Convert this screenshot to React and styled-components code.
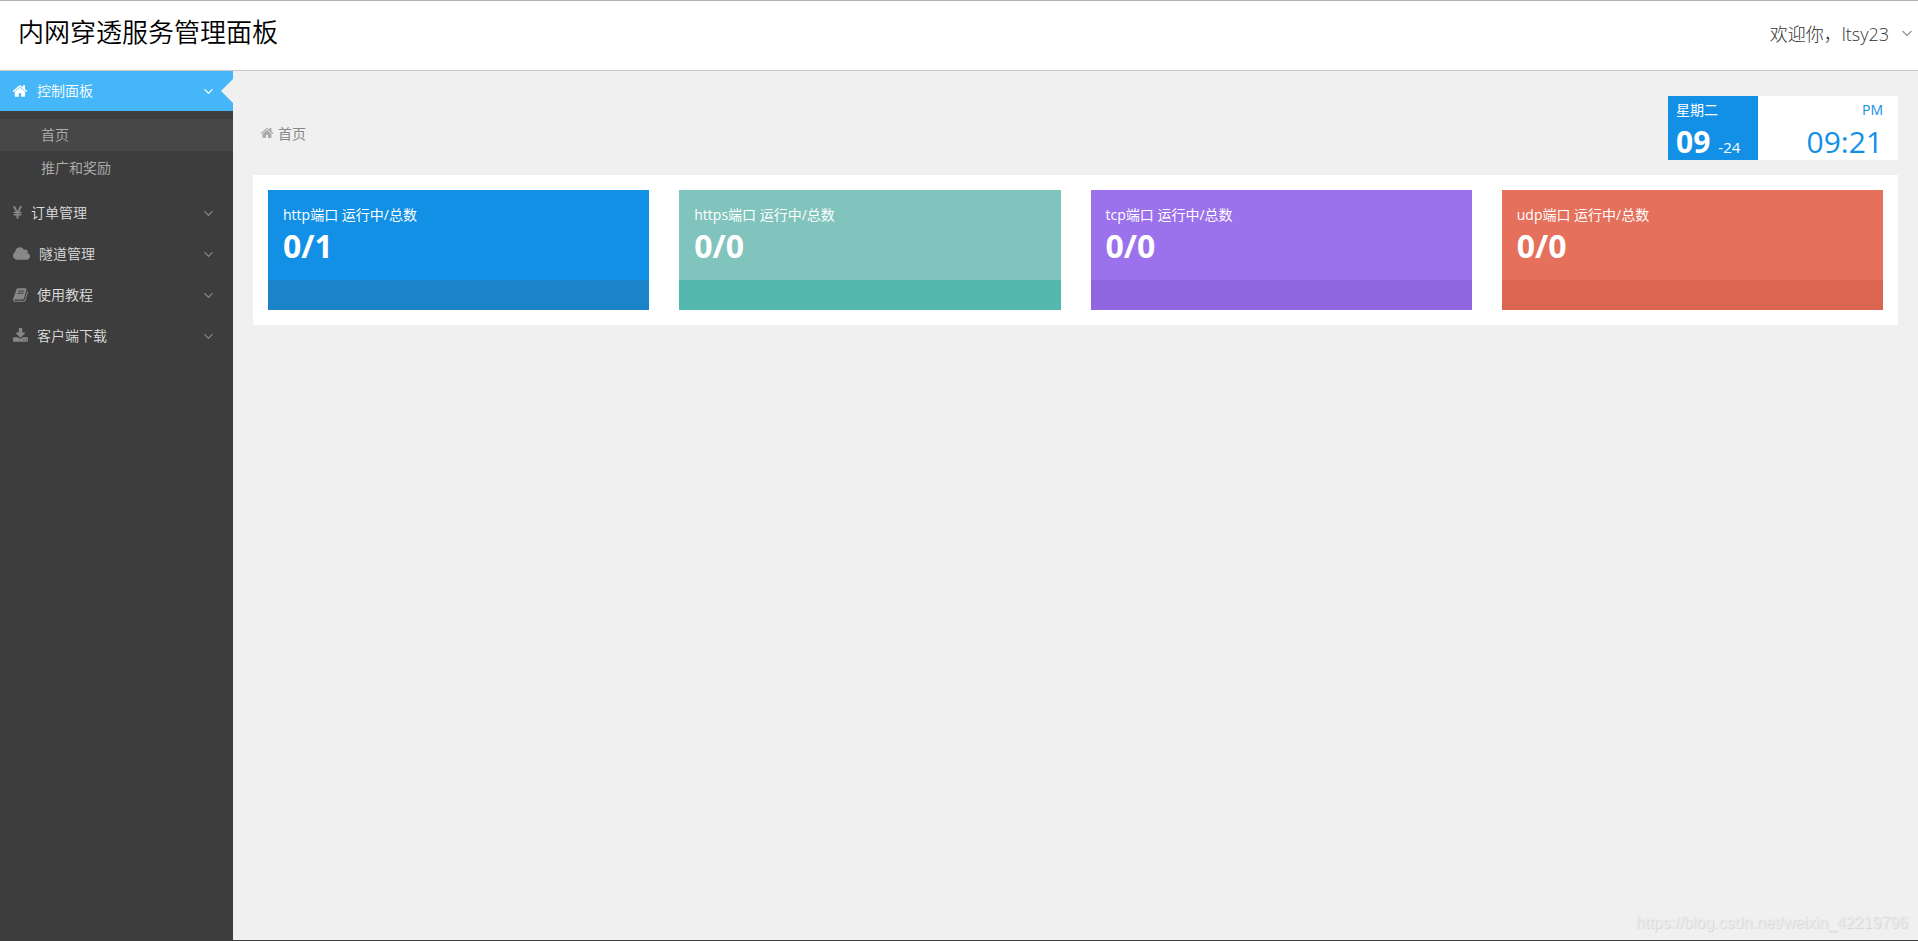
import { useState } from "react"
import styled, { createGlobalStyle } from "styled-components"

const GlobalStyle = createGlobalStyle`
* {
box-sizing:border-box;
}
body {
margin:0;
background:#f0f0f0;
font-family:"Open Sans", "Noto Sans CJK SC", sans-serif;
font-size:14px;
}
a {
color:inherit;
text-decoration:none;
}
h1, p, ul {
margin:0;
padding:0;
}
ul {
list-style:none;
}
`

const Page = styled.div`
display:flex;
flex-direction:column;
min-height:100vh;
border-top:1px solid #b0b0b0;
border-bottom:1px solid #3d3d3d;
`
const Header = styled.header`
display:flex;
justify-content:space-between;
height:70px;
padding:0 6px 0 18px;
background:#fff;
border-bottom:1px solid #c8c8c8;
`
const Title = styled.h1`
font-size:26px;
font-weight:350;
line-height:62px;
color:#000;
`
const UserButton = styled.button`
display:flex;
align-items:center;
gap:13px;
height:64px;
padding:0;
border:0;
background:none;
font-family:inherit;
font-size:18px;
font-weight:300;
color:#333;
cursor:pointer;
svg {
fill:#999;
}
`
const Body = styled.div`
display:flex;
flex:1;
`
const Sidebar = styled.nav`
flex:0 0 233px;
background:#3d3d3d;
`
const Menu = styled.ul`
display:flex;
flex-direction:column;
gap:1px;
`
const MenuLink = styled.a`
position:relative;
display:flex;
align-items:center;
gap:9px;
height:40px;
padding:0 20px 0 13px;
font-weight:350;
color:${(props) => (props.$active ? "#fff" : "#ddd")};
background:${(props) => (props.$active ? "#45b6f7" : "transparent")};
svg {
fill:${(props) => (props.$active ? "#fff" : "#888")};
}
&::after {
content:"";
display:${(props) => (props.$active ? "block" : "none")};
position:absolute;
top:8px;
right:0;
border:12px solid transparent;
border-left-width:0;
border-right-color:#f0f0f0;
}
`
const MenuText = styled.span`
flex:1;
padding-bottom:2px;
`
const SubMenu = styled.ul`
display:flex;
flex-direction:column;
gap:1px;
padding:8px 0;
`
const SubLink = styled.a`
display:block;
padding-left:41px;
line-height:32px;
font-weight:350;
color:#b0b0b0;
background:${(props) => (props.$active ? "#474747" : "transparent")};
`
const Main = styled.main`
display:flex;
flex-direction:column;
flex:1;
min-width:0;
padding:25px 20px 0;
`
const TopRow = styled.div`
display:flex;
justify-content:space-between;
align-items:center;
margin-bottom:15px;
`
const Breadcrumb = styled.a`
display:flex;
align-items:center;
gap:4px;
padding:10px 0 0 8px;
color:#888;
svg {
fill:#aaa;
}
`
const Clock = styled.div`
display:flex;
height:64px;
`
const DateBox = styled.div`
width:90px;
padding:4px 8px 0;
color:#fff;
background:#1190e6;
`
const TimeBox = styled.div`
width:140px;
padding:4px 15px 0;
text-align:right;
color:#1190e6;
background:#fff;
`
const SmallLine = styled.p`
line-height:20px;
`
const BigLine = styled.p`
display:flex;
align-items:baseline;
justify-content:${(props) => (props.$end ? "flex-end" : "flex-start")};
gap:8px;
line-height:44px;
font-size:15px;
`
const BigText = styled.span`
font-size:30px;
font-weight:${(props) => (props.$bold ? 700 : 400)};
`
const Panel = styled.section`
display:grid;
grid-template-columns:repeat(4, 1fr);
gap:30px;
padding:15px;
background:#fff;
`
const Tile = styled.article`
color:#fff;
background:${(props) => props.$color};
border-bottom:30px solid ${(props) => props.$dark};
`
const TileBody = styled.div`
height:90px;
padding:15px 15px 0;
`
const TileCount = styled.p`
font-size:32px;
font-weight:700;
line-height:42px;
`
const Watermark = styled.footer`
margin-top:auto;
padding:0 0 7px;
margin-right:-10px;
text-align:right;
font-family:"Liberation Sans", sans-serif;
font-size:16px;
line-height:20px;
color:#ebebeb;
text-shadow:1px 1px 1px #d4d4d4;
`

const icons = {
    home: {
        x: 64,
        width: 1664,
        d: "M1408 992v480q0 26-19 45t-45 19h-384v-384h-256v384h-384q-26 0-45-19t-19-45v-480q0-1 .5-3t.5-3l575-474 575 474q1 2 1 6zm223-69l-62 74q-8 9-21 11h-3q-13 0-21-7l-692-577-692 577q-12 8-24 7-13-2-21-11l-62-74q-8-10-7-23.5t11-21.5l719-599q32-26 76-26t76 26l244 204v-195q0-14 9-23t23-9h192q14 0 23 9t9 23v408l219 182q10 8 11 21.5t-7 23.5z",
    },
    yen: {
        x: 385,
        width: 1027,
        d: "M985.5 1536h-172q-13 0-22.5-9t-9.5-23v-330h-288q-13 0-22.5-9t-9.5-23v-103q0-13 9.5-22.5t22.5-9.5h288v-85h-288q-13 0-22.5-9t-9.5-23v-104q0-13 9.5-22.5t22.5-9.5h214l-321-578q-8-16 0-32 10-16 28-16h194q19 0 29 18l215 425q19 38 56 125 10-24 30.5-68t27.5-61l191-420q8-19 29-19h191q17 0 27 16 9 14 1 31l-313 579h215q13 0 22.5 9.5t9.5 22.5v104q0 14-9.5 23t-22.5 9h-290v85h290q13 0 22.5 9.5t9.5 22.5v103q0 14-9.5 23t-22.5 9h-290v330q0 13-9.5 22.5t-22.5 9.5z",
    },
    cloud: {
        x: 64,
        width: 1920,
        d: "M1984 1152q0 159-112.5 271.5t-271.5 112.5h-1088q-185 0-316.5-131.5t-131.5-316.5q0-132 71-241.5t187-163.5q-2-28-2-43 0-212 150-362t362-150q158 0 286.5 88t187.5 230q70-62 166-62 106 0 181 75t75 181q0 75-41 138 129 30 213 134.5t84 239.5z",
    },
    book: {
        x: 64,
        width: 1664,
        d: "M1703 478q40 57 18 129l-275 906q-19 64-76.5 107.5t-122.5 43.5h-923q-77 0-148.5-53.5t-99.5-131.5q-24-67-2-127 0-4 3-27t4-37q1-8-3-21.5t-3-19.5q2-11 8-21t16.5-23.5 16.5-23.5q23-38 45-91.5t30-91.5q3-10 .5-30t-.5-28q3-11 17-28t17-23q21-36 42-92t25-90q1-9-2.5-32t.5-28q4-13 22-30.5t22-22.5q19-26 42.5-84.5t27.5-96.5q1-8-3-25.5t-2-26.5q2-8 9-18t18-23 17-21q8-12 16.5-30.5t15-35 16-36 19.5-32 26.5-23.5 36-11.5 47.5 5.5l-1 3q38-9 51-9h761q74 0 114 56t18 130l-274 906q-36 119-71.5 153.5t-128.5 34.5h-869q-27 0-38 15-11 16-1 43 24 70 144 70h923q29 0 56-15.5t35-41.5l300-987q7-22 5-57 38 15 59 43zm-1064 2q-4 13 2 22.5t20 9.5h608q13 0 25.5-9.5t16.5-22.5l21-64q4-13-2-22.5t-20-9.5h-608q-13 0-25.5 9.5t-16.5 22.5zm-83 256q-4 13 2 22.5t20 9.5h608q13 0 25.5-9.5t16.5-22.5l21-64q4-13-2-22.5t-20-9.5h-608q-13 0-25.5 9.5t-16.5 22.5z",
    },
    download: {
        x: 64,
        width: 1664,
        d: "M1344 1344q0-26-19-45t-45-19-45 19-19 45 19 45 45 19 45-19 19-45zm256 0q0-26-19-45t-45-19-45 19-19 45 19 45 45 19 45-19 19-45zm128-224v320q0 40-28 68t-68 28h-1472q-40 0-68-28t-28-68v-320q0-40 28-68t68-28h465l135 136q58 56 136 56t136-56l136-136h464q40 0 68 28t28 68zm-325-569q17 41-14 70l-448 448q-18 19-45 19t-45-19l-448-448q-31-29-14-70 17-39 59-39h256v-448q0-26 19-45t45-19h256q26 0 45 19t19 45v448h256q42 0 59 39z",
    },
    angle: {
        x: 384,
        width: 1024,
        d: "M1395 736q0 13-10 23l-466 466q-10 10-23 10t-23-10l-466-466q-10-10-10-23t10-23l50-50q10-10 23-10t23 10l393 393 393-393q10-10 23-10t23 10l50 50q10 10 10 23z",
    },
}

const Icon = ({ name, size = 16 }) => {
    const { x, width, d } = icons[name]
    return (
        <svg
            width={Math.round((size * width) / 1792)}
            height={size}
            viewBox={`${x} 0 ${width} 1792`}
            aria-hidden="true"
        >
            <path d={d} />
        </svg>
    )
}

const menuItems = [
    { icon: "home", text: "控制面板", children: ["首页", "推广和奖励"] },
    { icon: "yen", text: "订单管理" },
    { icon: "cloud", text: "隧道管理" },
    { icon: "book", text: "使用教程" },
    { icon: "download", text: "客户端下载" },
]

const tiles = [
    { name: "http", count: "0/1", color: "#1190e6", dark: "#1b84c9" },
    { name: "https", count: "0/0", color: "#81c3bd", dark: "#54b8ae" },
    { name: "tcp", count: "0/0", color: "#9b72eb", dark: "#8f66df" },
    { name: "udp", count: "0/0", color: "#e5705c", dark: "#dc6551" },
]

const App = () => {
    const [active, setActive] = useState(0)

    return (
        <Page>
            <GlobalStyle />
            <Header>
                <Title>内网穿透服务管理面板</Title>
                <UserButton type="button">
                    欢迎你，ltsy23
                    <Icon name="angle" size={18} />
                </UserButton>
            </Header>
            <Body>
                <Sidebar>
                    <Menu>
                        {menuItems.map((item, index) => (
                            <li key={item.text}>
                                <MenuLink href="#" $active={index === active} onClick={() => setActive(index)}>
                                    <Icon name={item.icon} />
                                    <MenuText>{item.text}</MenuText>
                                    <Icon name="angle" />
                                </MenuLink>
                                {item.children && (
                                    <SubMenu>
                                        {item.children.map((child, i) => (
                                            <li key={child}>
                                                <SubLink href="#" $active={i === 0}>{child}</SubLink>
                                            </li>
                                        ))}
                                    </SubMenu>
                                )}
                            </li>
                        ))}
                    </Menu>
                </Sidebar>
                <Main>
                    <TopRow>
                        <Breadcrumb href="#">
                            <Icon name="home" size={14} />
                            首页
                        </Breadcrumb>
                        <Clock>
                            <DateBox>
                                <SmallLine>星期二</SmallLine>
                                <BigLine>
                                    <BigText $bold>09</BigText>
                                    <span>-24</span>
                                </BigLine>
                            </DateBox>
                            <TimeBox>
                                <SmallLine>PM</SmallLine>
                                <BigLine $end>
                                    <BigText>09:21</BigText>
                                </BigLine>
                            </TimeBox>
                        </Clock>
                    </TopRow>
                    <Panel>
                        {tiles.map((tile) => (
                            <Tile key={tile.name} $color={tile.color} $dark={tile.dark}>
                                <TileBody>
                                    <SmallLine>{tile.name}端口 运行中/总数</SmallLine>
                                    <TileCount>{tile.count}</TileCount>
                                </TileBody>
                            </Tile>
                        ))}
                    </Panel>
                    <Watermark>https://blog.csdn.net/weixin_42219796</Watermark>
                </Main>
            </Body>
        </Page>
    )
}

export default App
